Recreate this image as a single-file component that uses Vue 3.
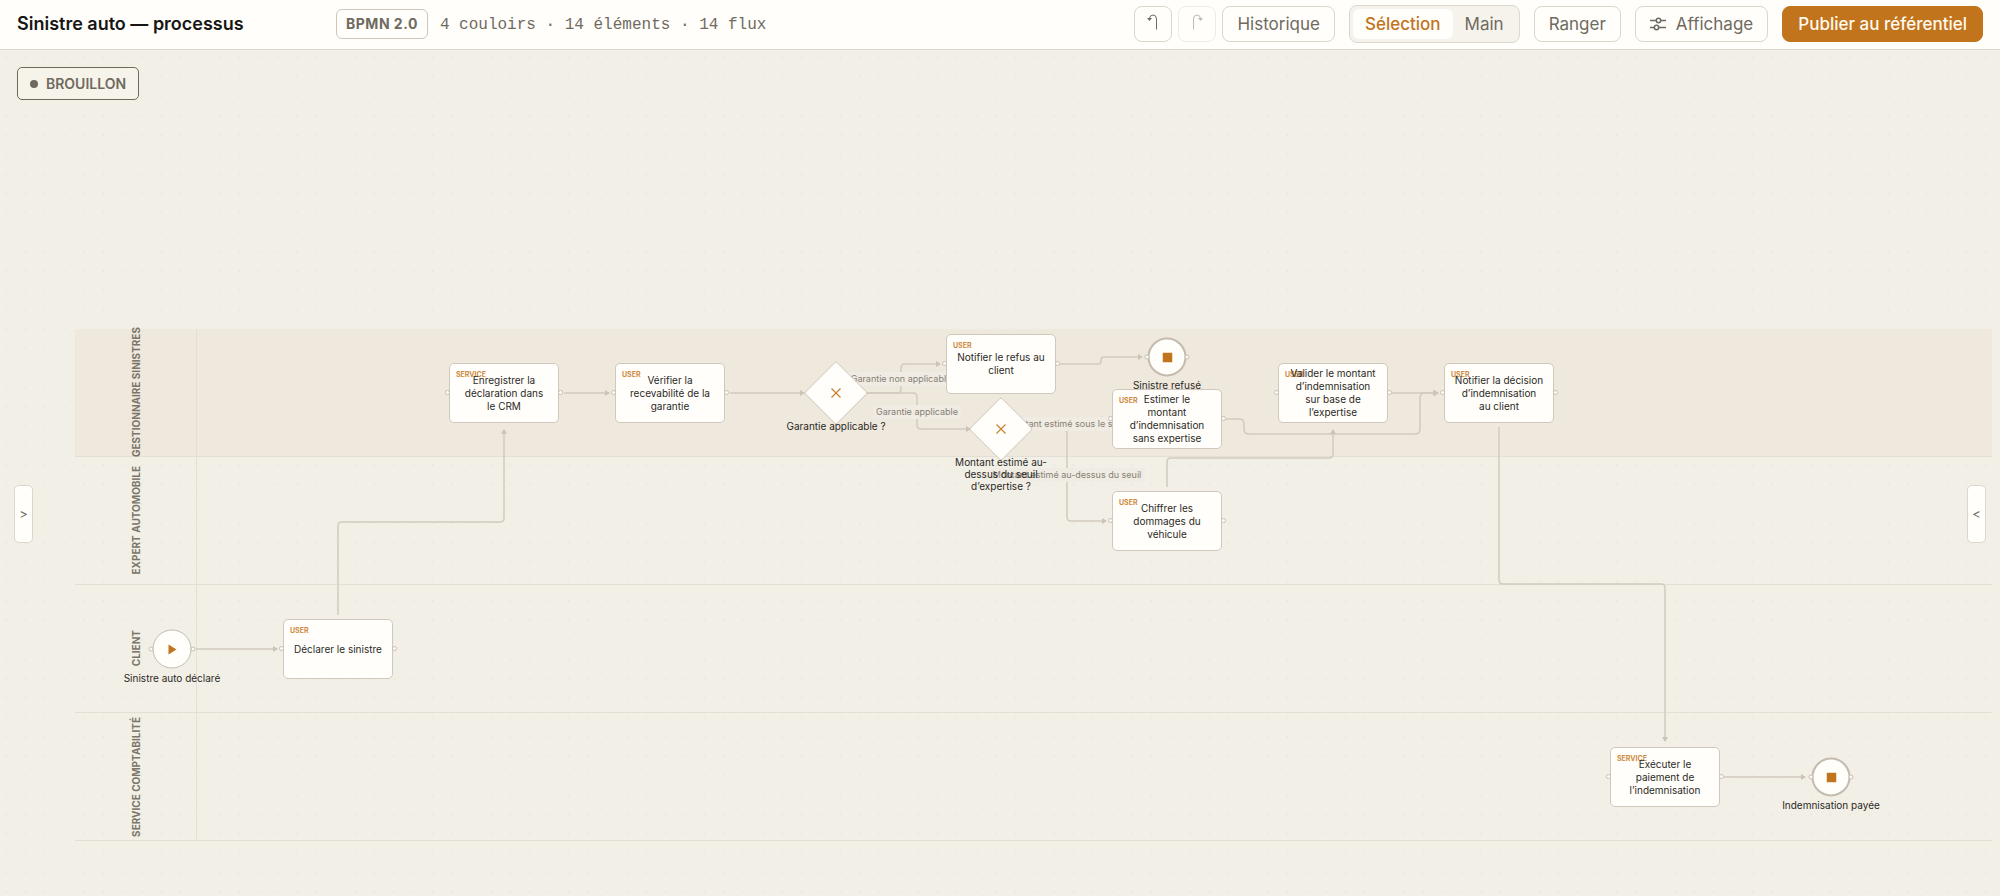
<script setup>
import { ref } from 'vue'

const title = ref('Sinistre auto — processus')
const mode = ref('select')

const lanes = [
  { name: 'Gestionnaire sinistres', active: true },
  { name: 'Expert automobile' },
  { name: 'Client' },
  { name: 'Service comptabilité' },
]

const nodes = [
  { id: 'start', kind: 'start', x: 172, y: 599, label: 'Sinistre auto déclaré' },
  { id: 'declare', kind: 'task', type: 'User', x: 338, y: 599, label: 'Déclarer le sinistre' },
  { id: 'record', kind: 'task', type: 'Service', x: 504, y: 343, label: 'Enregistrer la\ndéclaration dans\nle CRM' },
  { id: 'check', kind: 'task', type: 'User', x: 670, y: 343, label: 'Vérifier la\nrecevabilité de la\ngarantie' },
  { id: 'covered', kind: 'gateway', x: 836, y: 343, label: 'Garantie applicable ?' },
  { id: 'refusal', kind: 'task', type: 'User', x: 1001, y: 314, label: 'Notifier le refus au\nclient' },
  { id: 'refused', kind: 'end', x: 1167, y: 307, label: 'Sinistre refusé' },
  { id: 'threshold', kind: 'gateway', x: 1001, y: 379, label: 'Montant estimé au-\ndessus du seuil\nd’expertise ?' },
  { id: 'estimate', kind: 'task', type: 'User', x: 1167, y: 369, label: 'Estimer le\nmontant\nd’indemnisation\nsans expertise' },
  { id: 'assess', kind: 'task', type: 'User', x: 1167, y: 471, label: 'Chiffrer les\ndommages du\nvéhicule' },
  { id: 'validate', kind: 'task', type: 'User', x: 1333, y: 343, label: 'Valider le montant\nd’indemnisation\nsur base de\nl’expertise' },
  { id: 'decision', kind: 'task', type: 'User', x: 1499, y: 343, label: 'Notifier la décision\nd’indemnisation\nau client' },
  { id: 'pay', kind: 'task', type: 'Service', x: 1665, y: 727, label: 'Exécuter le\npaiement de\nl’indemnisation' },
  { id: 'paid', kind: 'end', x: 1831, y: 727, label: 'Indemnisation payée' },
]

const edges = [
  'M196 599H277',
  'M338 565V476q0 -4 4 -4H500q4 0 4 -4V380',
  'M564 343H609',
  'M730 343H804',
  'M866 343H897q4 0 4 -4V318q0 -4 4 -4H940',
  'M866 343H913q4 0 4 4V375q0 4 4 4H970',
  'M1033 379H1063q4 0 4 -4V373q0 -4 4 -4H1105',
  'M1033 379H1063q4 0 4 4V467q0 4 4 4H1106',
  'M1060 314H1098q3 0 3 -3V310q0 -3 3 -3H1142',
  'M1226 369H1239q5 0 5 5V379q0 5 5 5H1415q5 0 5 -5V348q0 -5 5 -5H1437',
  'M1167 437V412q0 -4 4 -4H1329q4 0 4 -4V380',
  'M1392 343H1438',
  'M1499 377V530q0 4 4 4H1661q4 0 4 4V691',
  'M1724 727H1805',
]

const edgeLabels = [
  { x: 901, y: 329, text: 'Garantie non applicable' },
  { x: 917, y: 362, text: 'Garantie applicable' },
  { x: 1067, y: 374, text: 'Montant estimé sous le seuil' },
  { x: 1067, y: 425, text: 'Montant estimé au-dessus du seuil' },
]

const place = (p) => ({ left: p.x + 'px', top: p.y + 'px' })
</script>

<template>
  <div class="app">
    <header class="bar">
      <input v-model="title" class="title" aria-label="Nom du processus" />
      <span class="badge">BPMN 2.0</span>
      <span class="stats">4 couloirs · 14 éléments · 14 flux</span>
      <div class="actions">
        <div class="history">
          <button class="btn square" aria-label="Annuler">
            <svg width="12" height="18" viewBox="0 0 12 18"><path d="M9.500 16.500V6Q9.500 2 6 2T2.500 6" /><path class="tip" d="M0 5h5L2.500 8z" /></svg>
          </button>
          <button class="btn square" aria-label="Rétablir" disabled>
            <svg width="12" height="18" viewBox="0 0 12 18"><path d="M2.500 16.500V6Q2.500 2 6 2T9.500 6" /><path class="tip" d="M7 5h5L9.500 8z" /></svg>
          </button>
          <button class="btn">Historique</button>
        </div>
        <div class="segment" role="group" aria-label="Mode du pointeur">
          <button :class="{ on: mode === 'select' }" @click="mode = 'select'">Sélection</button>
          <button :class="{ on: mode === 'hand' }" @click="mode = 'hand'">Main</button>
        </div>
        <button class="btn">Ranger</button>
        <button class="btn with-icon">
          <svg width="16" height="14" viewBox="0 0 16 14"><path d="M0 3.500h6M11 3.500h5M0 10.500h4M9 10.500h7" /><circle cx="8.500" cy="3.500" r="2.200" /><circle cx="6.500" cy="10.500" r="2.200" /></svg>
          Affichage
        </button>
        <button class="btn primary">Publier au référentiel</button>
      </div>
    </header>

    <main class="canvas">
      <svg class="layer" aria-hidden="true">
        <defs>
          <pattern id="dots" width="19.410" height="19.410" x="5" y="6.500" patternUnits="userSpaceOnUse">
            <circle cx="1" cy="1" r="0.700" fill="#e2ddd3" />
          </pattern>
        </defs>
        <rect width="100%" height="100%" fill="url(#dots)" />
      </svg>

      <section class="lanes">
        <div v-for="lane in lanes" :key="lane.name" class="lane" :class="{ active: lane.active }">
          <div class="lane-head"><span>{{ lane.name }}</span></div>
        </div>
      </section>

      <svg class="layer" aria-hidden="true">
        <defs>
          <marker id="arrow" viewBox="0 0 5 6" refX="4" refY="3" markerWidth="5" markerHeight="6" markerUnits="userSpaceOnUse" orient="auto">
            <path d="M0 0L5 3L0 6z" fill="#cdc4b8" />
          </marker>
        </defs>
        <path v-for="d in edges" :key="d" :d="d" class="edge" marker-end="url(#arrow)" />
      </svg>

      <span v-for="l in edgeLabels" :key="l.text" class="edge-label" :style="place(l)">{{ l.text }}</span>

      <div v-for="n in nodes" :key="n.id" class="node" :class="n.kind" :style="place(n)">
        <template v-if="n.kind === 'task'">
          <span class="type">{{ n.type }}</span>
          <span class="text">{{ n.label }}</span>
        </template>
        <template v-else>
          <svg v-if="n.kind === 'gateway'" class="diamond" width="64" height="64" viewBox="0 0 64 64">
            <path class="shape" d="M31 1.500Q32 .5 33 1.500L62.500 31Q63.500 32 62.500 33L33 62.500Q32 63.500 31 62.500L1.500 33Q.5 32 1.500 31z" />
            <path class="cross" d="M27.500 27.500l9 9M36.500 27.500l-9 9" />
          </svg>
          <svg v-else-if="n.kind === 'start'" width="10" height="12" viewBox="0 0 10 12"><path class="mark" d="M1 1l8 5l-8 5z" /></svg>
          <svg v-else width="10" height="10" viewBox="0 0 10 10"><path class="mark" d="M0 0h10v10h-10z" /></svg>
          <span class="caption">{{ n.label }}</span>
        </template>
        <template v-if="n.kind !== 'gateway'">
          <i class="port left"></i>
          <i class="port right"></i>
        </template>
      </div>

      <div class="status"><i></i>Brouillon</div>
      <button class="drawer at-left" aria-label="Ouvrir le panneau gauche">&gt;</button>
      <button class="drawer at-right" aria-label="Ouvrir le panneau droit">&lt;</button>
    </main>
  </div>
</template>

<style>
body {
  margin: 0;
  background: #f2efe7;
}
</style>

<style scoped>
.app {
  display: flex;
  flex-direction: column;
  min-height: 100vh;
  font-family: Inter, "Noto Sans", sans-serif;
  color: #2b2925;
}
button,
input {
  font-family: inherit;
}
.bar {
  display: flex;
  align-items: center;
  box-sizing: border-box;
  height: 50px;
  padding: 0 17px 2px;
  background: #fffefb;
  border-bottom: 1px solid #ddd6cc;
}
.title {
  width: 304px;
  margin-right: 15px;
  padding: 0;
  border: 0;
  background: none;
  font-size: 18px;
  font-weight: 600;
  color: #171614;
  outline: none;
}
.badge {
  padding: 0 9px;
  border: 1px solid #cfc6bb;
  border-radius: 6px;
  font-size: 14px;
  font-weight: 700;
  letter-spacing: 0.5px;
  line-height: 28px;
  color: #6f6a60;
  white-space: nowrap;
}
.stats {
  margin-left: 12px;
  font-family: "Liberation Mono", monospace;
  font-size: 16px;
  line-height: 20px;
  padding-top: 2px;
  color: #6f6a60;
  white-space: nowrap;
}
.actions {
  display: flex;
  align-items: center;
  gap: 14px;
  margin-left: auto;
}
.history {
  display: flex;
  gap: 6px;
}
.btn {
  box-sizing: border-box;
  height: 36px;
  padding: 0 14px;
  border: 1px solid #ddd6cc;
  border-radius: 8px;
  background: #fffefb;
  font-size: 17px;
  color: #6f6a60;
  white-space: nowrap;
}
.btn svg {
  fill: none;
  stroke: #6f6a60;
  stroke-width: 1.500;
}
.btn.square {
  display: grid;
  place-items: center;
  width: 38px;
  padding: 0 0 4px;
}
.square svg {
  stroke-width: 1;
}
.square .tip {
  fill: #6f6a60;
  stroke: none;
}
.square:disabled {
  opacity: 0.45;
}
.with-icon {
  display: flex;
  align-items: center;
  gap: 10px;
}
.btn.primary {
  padding: 0 15px;
  border-color: #c2741c;
  background: #c2741c;
  color: #fffaf0;
  font-weight: 500;
}
.segment {
  display: flex;
  box-sizing: border-box;
  height: 38px;
  padding: 3px;
  border: 1px solid #ddd6cc;
  border-radius: 8px;
  background: #f6f3ec;
}
.segment button {
  padding: 0 12px;
  border: 0;
  border-radius: 6px;
  background: none;
  font-size: 17px;
  color: #6f6a60;
}
.segment .on {
  background: #fffefb;
  font-weight: 500;
  color: #c2741c;
}
.canvas {
  position: relative;
  flex: 1;
  overflow: hidden;
  background: #f2efe7;
}
.layer {
  position: absolute;
  inset: 0;
  width: 100%;
  height: 100%;
}
.lanes {
  position: relative;
  margin: 279px 8px 54px 75px;
}
.lane {
  display: flex;
  box-sizing: border-box;
  height: 128px;
  border-bottom: 1px solid #e4ded5;
}
.lane.active {
  background: #efe8dd;
}
.lane-head {
  display: flex;
  align-items: center;
  justify-content: center;
  box-sizing: border-box;
  width: 122px;
  border-right: 1px solid #e4ded5;
}
.lane-head span {
  writing-mode: vertical-rl;
  rotate: 180deg;
  font-size: 10px;
  font-weight: 700;
  line-height: 12px;
  text-transform: uppercase;
  white-space: nowrap;
  color: #7a746a;
}
.edge {
  fill: none;
  stroke: #d2cabf;
  stroke-width: 1.500;
}
.edge-label {
  position: absolute;
  translate: -50% -50%;
  padding: 0 3px;
  border-radius: 2px;
  background: #f1ece3;
  font-size: 9px;
  line-height: 14px;
  white-space: nowrap;
  color: #857f75;
}
.node {
  position: absolute;
  display: grid;
  place-items: center;
  box-sizing: border-box;
  translate: -50% -50%;
}
.task {
  width: 110px;
  height: 60px;
  border: 1px solid #d0c8bc;
  border-radius: 5px;
  background: #fffefb;
}
.type {
  position: absolute;
  top: 6px;
  left: 6px;
  font-size: 7px;
  font-weight: 700;
  line-height: 9px;
  text-transform: uppercase;
  color: #cf8a42;
}
.text {
  position: relative;
  font-size: 10px;
  line-height: 13px;
  text-align: center;
  white-space: pre;
}
.start,
.end {
  width: 39px;
  height: 39px;
  border: 1px solid #c4bbae;
  border-radius: 50%;
  background: #fffefb;
}
.end {
  border-width: 2px;
}
.mark {
  fill: #c2741c;
}
.gateway {
  width: 64px;
  height: 64px;
}
.diamond .shape {
  fill: #fffefb;
  stroke: #cdc4b8;
}
.diamond .cross {
  stroke: #c9822f;
  stroke-width: 1.200;
}
.caption {
  position: absolute;
  top: 100%;
  left: 50%;
  translate: -50% 0;
  margin-top: 4px;
  font-size: 10px;
  line-height: 12px;
  text-align: center;
  white-space: pre;
}
.gateway .caption {
  margin-top: -5px;
}
.port {
  position: absolute;
  top: 50%;
  box-sizing: border-box;
  width: 5px;
  height: 5px;
  margin-top: -3px;
  border: 1px solid #c8beb2;
  border-radius: 50%;
  background: #fffefb;
}
.port.left {
  right: 100%;
}
.port.right {
  left: 100%;
}
.status {
  position: absolute;
  top: 17px;
  left: 17px;
  display: flex;
  align-items: center;
  gap: 8px;
  padding: 0 12px;
  border: 1px solid #6f6a60;
  border-radius: 5px;
  background: #f6f3ea;
  font-size: 14px;
  font-weight: 600;
  line-height: 31px;
  text-transform: uppercase;
  color: #6f6a60;
}
.status i {
  width: 8px;
  height: 8px;
  border-radius: 50%;
  background: #6f6a60;
}
.drawer {
  position: absolute;
  top: 435px;
  box-sizing: border-box;
  width: 19px;
  height: 58px;
  padding: 0;
  border: 1px solid #ddd6cc;
  border-radius: 5px;
  background: #fffefb;
  font-size: 13px;
  color: #6f6a60;
}
.at-left {
  left: 14px;
}
.at-right {
  right: 14px;
}
</style>
